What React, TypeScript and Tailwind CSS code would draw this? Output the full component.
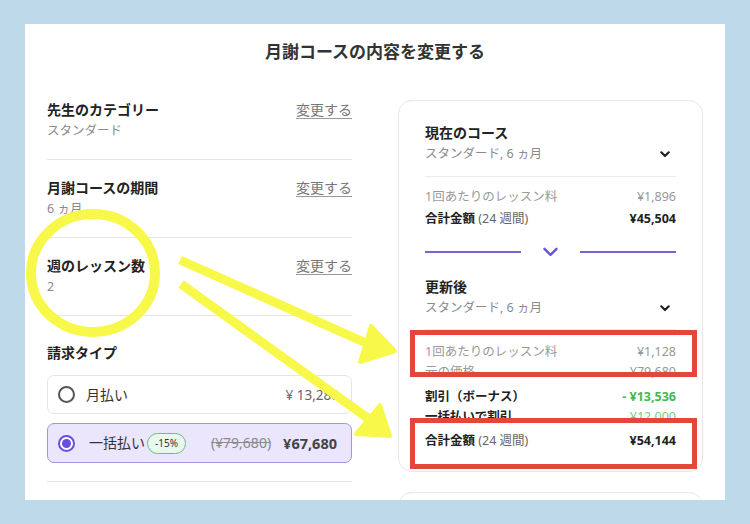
import React from "react";

const Chevron = ({ className }: { className?: string }) => (
  <svg width="10" height="7" viewBox="0 0 10 7" fill="none" className={className}>
    <path d="M1.3 1.3 5 5 8.7 1.3" stroke="currentColor" strokeWidth="2.2" strokeLinecap="round" strokeLinejoin="round" />
  </svg>
);

const settings = [
  { title: "先生のカテゴリー", value: "スタンダード" },
  { title: "月謝コースの期間", value: "6 ヵ月" },
  { title: "週のレッスン数", value: "2" },
];

function SettingRow({ title, value }: { title: string; value: string }) {
  return (
    <div className="flex justify-between border-b border-[#e6e6e6] pt-[18px] pb-[17px]">
      <div>
        <p className="text-[14px] leading-[20px] font-bold text-[#222]">{title}</p>
        <p className="text-[12.5px] leading-[22px] text-[#8a8a8a]">{value}</p>
      </div>
      <a className="text-[14px] leading-[20px] text-[#777] underline underline-offset-[3px] decoration-[#999]">変更する</a>
    </div>
  );
}

function Annotations() {
  // hand drawn marks laid over the screenshot
  return (
    <svg className="absolute inset-0 pointer-events-none" width="750" height="524" viewBox="0 0 750 524" fill="none">
      <ellipse cx="93" cy="273" rx="62" ry="59" stroke="#f8f84a" strokeWidth="10" />
      <line x1="180" y1="260" x2="366" y2="343" stroke="#f8f84a" strokeWidth="9" />
      <polygon points="371,326 395,351 360,362" fill="#f8f84a" stroke="#f8f84a" strokeWidth="4" strokeLinejoin="round" />
      <line x1="181" y1="284" x2="369" y2="419" stroke="#f8f84a" strokeWidth="9" />
      <polygon points="380,405 390,436 356,434" fill="#f8f84a" stroke="#f8f84a" strokeWidth="4" strokeLinejoin="round" />
      <rect x="412.5" y="332.5" width="282" height="42" stroke="#e3463d" strokeWidth="5" />
      <rect x="412.5" y="420.5" width="282" height="46" stroke="#e3463d" strokeWidth="5" />
    </svg>
  );
}

export default function App() {
  return (
    <div className="relative w-[750px] h-[524px] overflow-hidden bg-[#bed9ea] pt-[24px] px-[25px] font-['Noto_Sans','Noto_Sans_CJK_JP',sans-serif] text-[#222]">
      <div className="h-[476px] bg-white overflow-hidden">
        <h1 className="pt-[18px] text-center text-[17px] leading-[20px] font-semibold text-[#333]">
          月謝コースの内容を変更する
        </h1>

        <div className="mt-[20px] flex items-start gap-[46px] px-[22px]">
          {/* left: settings */}
          <div className="w-[305px]">
            {settings.map(s => (
              <SettingRow key={s.title} {...s} />
            ))}

            <p className="mt-[27px] text-[14px] leading-[20px] font-bold text-[#222]">請求タイプ</p>

            <div className="mt-[12px] flex h-[39px] items-center rounded-[7px] border border-[#e4e4e4] pl-[10px] pr-[12px]">
              <span className="h-[17px] w-[17px] rounded-full border-2 border-[#555]" />
              <span className="ml-[11px] text-[14px] leading-[20px] text-[#333]">月払い</span>
              <span className="ml-auto text-[13.5px] leading-[20px] text-[#666]">¥ 13,280</span>
            </div>

            <div className="mt-[9px] flex h-[40px] items-center rounded-[7px] border border-[#a593e0] bg-[#ebe5fd] pl-[10px] pr-[14px]">
              <span className="flex h-[17px] w-[17px] items-center justify-center rounded-full border-2 border-[#6a4de3] bg-white">
                <span className="h-[9px] w-[9px] rounded-full bg-[#6a4de3]" />
              </span>
              <span className="ml-[14px] text-[14px] leading-[20px] text-[#333]">一括払い</span>
              <span className="ml-[2px] rounded-full border border-[#63c27c] bg-[#e9f8ed] px-[7px] text-[10px] leading-[19px] text-[#333]">-15%</span>
              <span className="ml-auto text-[14px] leading-[20px] text-[#8a8a8a] line-through">(¥79,680)</span>
              <span className="ml-[12px] text-[14.5px] leading-[20px] font-bold text-[#444]">¥67,680</span>
            </div>

            <div className="mt-[18px] border-t border-[#e6e6e6]" />
          </div>

          {/* right: summary */}
          <div className="w-[305px] mt-[18px]">
            <div className="rounded-[14px] border border-[#e8e8e8] px-[26px] pt-[22px] pb-[20px]">
              <p className="text-[14px] leading-[20px] font-bold">現在のコース</p>
              <div className="flex items-center justify-between border-b border-[#ececec] pb-[11px]">
                <span className="text-[12.5px] leading-[22px] text-[#8a8a8a]">スタンダード, 6 ヵ月</span>
                <Chevron className="mr-[6px] text-[#222]" />
              </div>

              <div className="mt-[9px] flex justify-between text-[12.5px] leading-[22px] text-[#999]">
                <span>1回あたりのレッスン料</span>
                <span>¥1,896</span>
              </div>
              <div className="flex justify-between text-[12.5px] leading-[22px]">
                <span>
                  <b className="font-bold text-[#222]">合計金額</b>
                  <span className="text-[#666]"> (24 週間)</span>
                </span>
                <b className="font-bold text-[#222]">¥45,504</b>
              </div>

              <div className="mt-[17px] flex h-[10px] items-center gap-[22px]">
                <span className="h-[2px] flex-1 bg-[#7a62d4]" />
                <svg width="15" height="10" viewBox="0 0 15 10" fill="none">
                  <path d="M1.5 1.8 7.5 7.8 13.5 1.8" stroke="#6e55d2" strokeWidth="2.4" strokeLinecap="round" strokeLinejoin="round" />
                </svg>
                <span className="h-[2px] flex-1 bg-[#7a62d4]" />
              </div>

              <p className="mt-[20px] text-[14px] leading-[20px] font-bold">更新後</p>
              <div className="flex items-center justify-between border-b border-[#ececec] pb-[10px]">
                <span className="text-[12.5px] leading-[22px] text-[#8a8a8a]">スタンダード, 6 ヵ月</span>
                <Chevron className="mr-[6px] text-[#222]" />
              </div>

              <div className="mt-[11px] flex justify-between text-[12.5px] leading-[22px] text-[#999]">
                <span>1回あたりのレッスン料</span>
                <span>¥1,128</span>
              </div>
              <div className="flex justify-between text-[12.5px] leading-[18px] text-[#999]">
                <span>元の価格</span>
                <span>¥79,680</span>
              </div>
              <div className="mt-[6px] flex justify-between text-[12.5px] leading-[20px] font-bold">
                <span>割引（ボーナス）</span>
                <span className="text-[#45b84f]">- ¥13,536</span>
              </div>
              <div className="flex justify-between text-[12.5px] leading-[20px]">
                <span className="font-bold">一括払いで割引</span>
                <span className="text-[#78cc7e]">¥12,000</span>
              </div>
              <div className="mt-[4px] flex justify-between text-[12.5px] leading-[20px]">
                <span>
                  <b className="font-bold text-[#222]">合計金額</b>
                  <span className="text-[#666]"> (24 週間)</span>
                </span>
                <b className="font-bold text-[#222]">¥54,144</b>
              </div>
            </div>

            <div className="mt-[20px] h-[60px] rounded-[14px] border border-[#e8e8e8]" />
          </div>
        </div>
      </div>

      <Annotations />
    </div>
  );
}
